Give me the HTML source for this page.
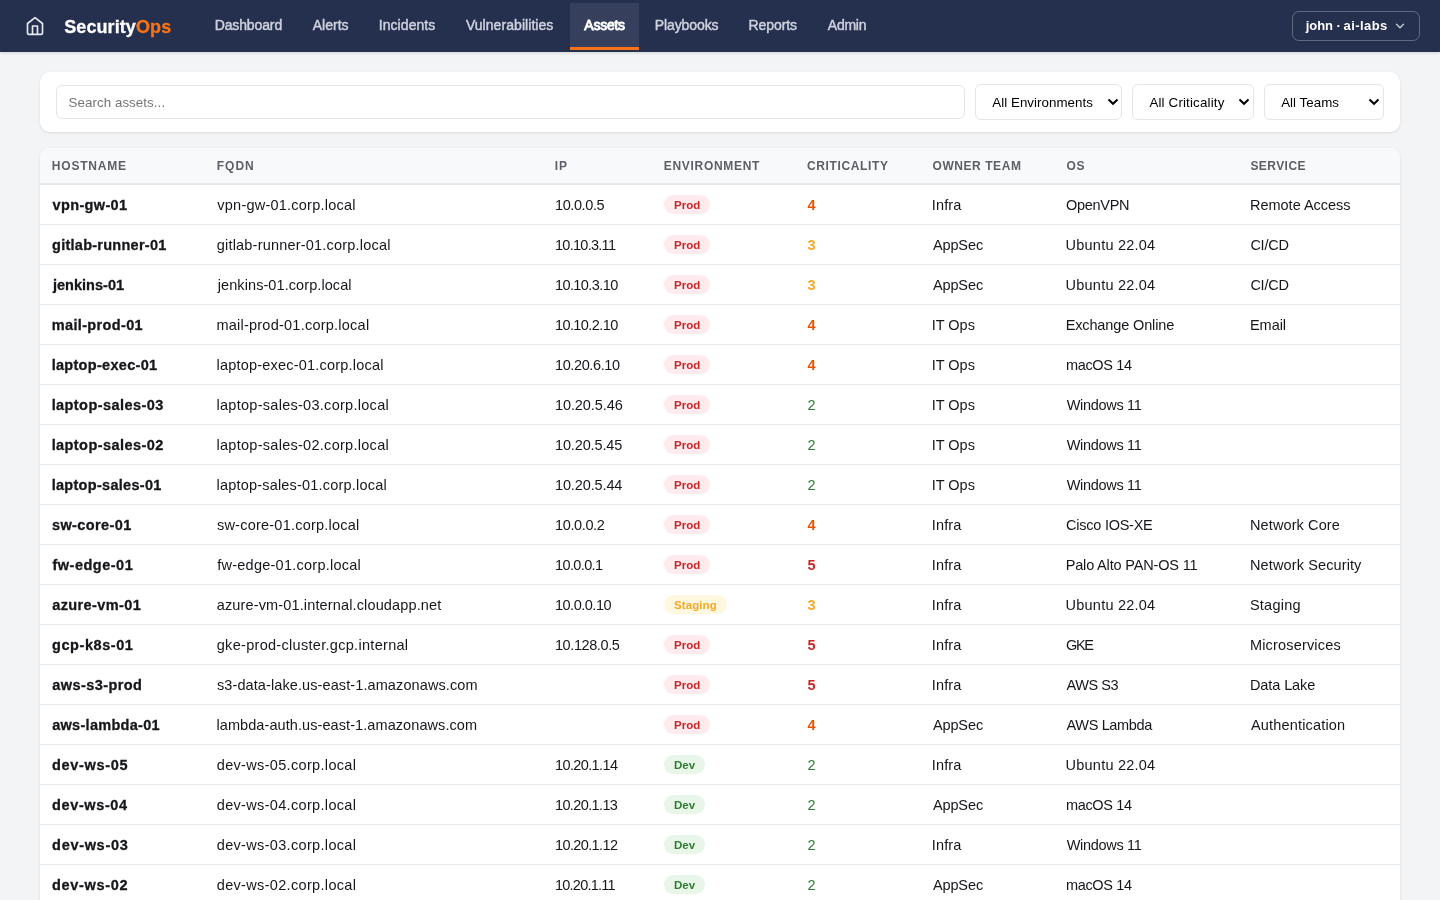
<!DOCTYPE html>
<html lang="en">
<head>
<meta charset="utf-8">
<title>SecurityOps - Assets</title>
<style>
*{box-sizing:border-box;margin:0;padding:0}
html,body{width:1440px;height:900px;overflow:hidden}
body{background:#f2f4f6;font-family:"Liberation Sans",sans-serif;color:#15171b;font-size:14.5px}
.nav,.fcard,.tcard{will-change:transform}
.nav{position:absolute;left:0;top:0;width:1440px;height:52px;background:#252f4e;box-shadow:0 1px 3px rgba(0,0,0,.14)}
.home{position:absolute;left:25px;top:16px;width:20px;height:20px}
.brand{position:absolute;left:64.2px;top:15px;letter-spacing:.09px;-webkit-text-stroke:.3px;font-size:18px;font-weight:700;color:#fff;line-height:24px}
.brand b{color:#f97316}
.links{position:absolute;left:201px;top:3px;height:47px}
.links a{position:absolute;top:0;display:block;height:47px;line-height:44px;text-align:center;color:#cdd2de;font-size:14px;white-space:nowrap;text-decoration:none;border-bottom:3px solid transparent;-webkit-text-stroke:.45px}
.links a.on{color:#fff;background:rgba(255,255,255,.08);border-bottom-color:#f97316;-webkit-text-stroke:.85px}
.user{position:absolute;left:1292px;top:11px;width:128px;height:30px;border:1px solid rgba(255,255,255,.28);border-radius:7px;color:#fff;font-weight:700;font-size:13px;line-height:27px;padding-left:12.8px;letter-spacing:.2px;word-spacing:-1.2px}
.user svg{position:absolute;left:101px;top:8px}
.fcard{position:absolute;left:40px;top:72px;width:1360px;height:60px;background:#fff;border-radius:10px;box-shadow:0 1px 3px rgba(0,0,0,.1)}
.search{position:absolute;left:16.4px;top:13px;width:908.3px;height:33.5px;border:1px solid #e3e5eb;border-radius:6px;color:#757575;font-size:13.33px;line-height:33.5px;padding-left:11.1px;letter-spacing:.07px}
.sel{position:absolute;top:12px;height:35.5px;border:1px solid #e3e5eb;border-radius:6px;color:#000;font-size:13.33px;line-height:35.5px;padding-left:16px;letter-spacing:.04px}
.sel svg{position:absolute;right:2.2px;top:13.2px}
.tcard{position:absolute;left:40px;top:148px;width:1360px;height:800px;background:#fff;border-radius:10px;box-shadow:0 1px 3px rgba(0,0,0,.1);overflow:hidden}
table{border-collapse:separate;border-spacing:0;width:1360px;table-layout:fixed}
th{height:37px;background:#f8f9fb;border-bottom:2px solid #e5e7eb;text-align:left;padding:1px 12px 0;font-size:12px;font-weight:700;color:#5c6066;white-space:nowrap;text-transform:uppercase}
td{height:40px;border-bottom:1px solid #e8eaed;padding:1px 12px 0;font-size:14.5px;white-space:nowrap;vertical-align:middle}
td.h{font-weight:700;-webkit-text-stroke:.3px}
.b{display:inline-block;position:relative;top:-.5px;height:19px;line-height:21px;border-radius:10px;padding:0 9.8px 0 10px;font-size:11.5px;font-weight:700;vertical-align:middle}
.prod{background:#ffebee;color:#c62828}
.staging{background:#fff8e1;color:#f9a825}
.dev{background:#e8f5e9;color:#2e7d32}
.c{font-weight:700;margin-left:.4px}
.c5{color:#c62828}.c4{color:#e65100}.c3{color:#f9a825}.c2{color:#2e7d32;font-weight:400}
</style>
</head>
<body>
<div class="nav">
<svg class="home" viewBox="0 0 24 24" fill="none" stroke="#e6e9f0" stroke-width="2" stroke-linecap="round" stroke-linejoin="round"><path d="M3 9l9-7 9 7v11a2 2 0 0 1-2 2H5a2 2 0 0 1-2-2z"/><polyline points="9 22 9 12 15 12 15 22"/></svg>
<div class="brand">Security<b>Ops</b></div>
<div class="links"><a style="left:0.5px;width:94px;letter-spacing:-0.12px;text-indent:-0.31px">Dashboard</a><a style="left:97.5px;width:64px;letter-spacing:0.02px;text-indent:0.38px">Alerts</a><a style="left:164.5px;width:83.5px;letter-spacing:0.08px;text-indent:-0.42px">Incidents</a><a style="left:251px;width:115px;letter-spacing:0.06px;text-indent:0.3px">Vulnerabilities</a><a class="on" style="left:369px;width:69px;letter-spacing:-0.24px;text-indent:0.2px">Assets</a><a style="left:440.5px;width:90.75px;letter-spacing:-0.09px;text-indent:-0.46px">Playbooks</a><a style="left:534.25px;width:75.5px;letter-spacing:-0.05px;text-indent:-0.59px">Reports</a><a style="left:612.75px;width:66px;letter-spacing:-0.28px;text-indent:0.52px">Admin</a></div>
<div class="user"><span style="letter-spacing:-.1px;margin-right:1px">john</span> · <span style="letter-spacing:.42px">ai-labs</span><svg width="12" height="12" viewBox="0 0 24 24" fill="none" stroke="#c9cedb" stroke-width="2.6" stroke-linecap="round" stroke-linejoin="round"><polyline points="5 8.5 12 15.5 19 8.5"/></svg></div>
</div>
<div class="fcard">
<div class="search">Search assets...</div>
<div class="sel" style="left:935.3px;width:146.5px">All Environments<svg width="12" height="8" viewBox="0 0 12 8" fill="none" stroke="#000" stroke-width="2"><polyline points="1.5 1.5 6 5.8 10.5 1.5"/></svg></div>
<div class="sel" style="left:1092.4px;width:121.2px;letter-spacing:.17px">All Criticality<svg width="12" height="8" viewBox="0 0 12 8" fill="none" stroke="#000" stroke-width="2"><polyline points="1.5 1.5 6 5.8 10.5 1.5"/></svg></div>
<div class="sel" style="left:1224.2px;width:119.4px">All Teams<svg width="12" height="8" viewBox="0 0 12 8" fill="none" stroke="#000" stroke-width="2"><polyline points="1.5 1.5 6 5.8 10.5 1.5"/></svg></div>
</div>
<div class="tcard">
<table>
<colgroup><col style="width:165px"><col style="width:338px"><col style="width:109px"><col style="width:143px"><col style="width:126px"><col style="width:134px"><col style="width:184px"><col style="width:161px"></colgroup>
<thead><tr><th style="letter-spacing:0.77px;padding-left:11.85px">Hostname</th><th style="letter-spacing:0.95px;padding-left:11.85px">FQDN</th><th style="letter-spacing:0.74px;padding-left:11.85px">IP</th><th style="letter-spacing:0.68px;padding-left:11.85px">Environment</th><th style="letter-spacing:0.65px;padding-left:11.9px">Criticality</th><th style="letter-spacing:0.56px;padding-left:11.54px">Owner Team</th><th style="letter-spacing:0.87px;padding-left:11.39px">OS</th><th style="letter-spacing:0.44px;padding-left:11.4px">Service</th></tr></thead>
<tbody>
<tr><td class="h" style="letter-spacing:0.35px;padding-left:12.6px">vpn-gw-01</td><td style="letter-spacing:0.23px;padding-left:12.32px">vpn-gw-01.corp.local</td><td style="letter-spacing:-0.4px;padding-left:11.97px">10.0.0.5</td><td><span class="b prod" style="letter-spacing:0.03px">Prod</span></td><td><span class="c c4">4</span></td><td style="letter-spacing:0.16px;padding-left:10.72px">Infra</td><td style="letter-spacing:-0.29px;padding-left:11.06px">OpenVPN</td><td style="letter-spacing:-0.01px;padding-left:10.99px">Remote Access</td></tr>
<tr><td class="h" style="letter-spacing:0.26px;padding-left:12.04px">gitlab-runner-01</td><td style="letter-spacing:0.2px;padding-left:11.74px">gitlab-runner-01.corp.local</td><td style="letter-spacing:-0.72px;padding-left:11.97px">10.10.3.11</td><td><span class="b prod" style="letter-spacing:0.03px">Prod</span></td><td><span class="c c3">3</span></td><td style="letter-spacing:-0.1px;padding-left:11.88px">AppSec</td><td style="letter-spacing:0.23px;padding-left:10.56px">Ubuntu 22.04</td><td style="letter-spacing:-0.25px;padding-left:11.38px">CI/CD</td></tr>
<tr><td class="h" style="letter-spacing:0.03px;padding-left:12.92px">jenkins-01</td><td style="letter-spacing:0.08px;padding-left:12.78px">jenkins-01.corp.local</td><td style="letter-spacing:-0.59px;padding-left:11.97px">10.10.3.10</td><td><span class="b prod" style="letter-spacing:0.03px">Prod</span></td><td><span class="c c3">3</span></td><td style="letter-spacing:-0.1px;padding-left:11.88px">AppSec</td><td style="letter-spacing:0.23px;padding-left:10.56px">Ubuntu 22.04</td><td style="letter-spacing:-0.25px;padding-left:11.38px">CI/CD</td></tr>
<tr><td class="h" style="letter-spacing:0.36px;padding-left:11.71px">mail-prod-01</td><td style="letter-spacing:0.24px;padding-left:11.38px">mail-prod-01.corp.local</td><td style="letter-spacing:-0.59px;padding-left:11.97px">10.10.2.10</td><td><span class="b prod" style="letter-spacing:0.03px">Prod</span></td><td><span class="c c4">4</span></td><td style="letter-spacing:-0.01px;padding-left:10.72px">IT Ops</td><td style="letter-spacing:-0.13px;padding-left:10.66px">Exchange Online</td><td style="letter-spacing:-0.05px;padding-left:10.99px">Email</td></tr>
<tr><td class="h" style="letter-spacing:0.3px;padding-left:11.64px">laptop-exec-01</td><td style="letter-spacing:0.21px;padding-left:11.47px">laptop-exec-01.corp.local</td><td style="letter-spacing:-0.38px;padding-left:11.97px">10.20.6.10</td><td><span class="b prod" style="letter-spacing:0.03px">Prod</span></td><td><span class="c c4">4</span></td><td style="letter-spacing:-0.01px;padding-left:10.72px">IT Ops</td><td style="letter-spacing:-0.33px;padding-left:10.92px">macOS 14</td><td></td></tr>
<tr><td class="h" style="letter-spacing:0.43px;padding-left:11.64px">laptop-sales-03</td><td style="letter-spacing:0.28px;padding-left:11.47px">laptop-sales-03.corp.local</td><td style="letter-spacing:-0.09px;padding-left:11.97px">10.20.5.46</td><td><span class="b prod" style="letter-spacing:0.03px">Prod</span></td><td><span class="c c2">2</span></td><td style="letter-spacing:-0.01px;padding-left:10.72px">IT Ops</td><td style="letter-spacing:-0.31px;padding-left:11.69px">Windows 11</td><td></td></tr>
<tr><td class="h" style="letter-spacing:0.43px;padding-left:11.64px">laptop-sales-02</td><td style="letter-spacing:0.28px;padding-left:11.47px">laptop-sales-02.corp.local</td><td style="letter-spacing:-0.13px;padding-left:11.97px">10.20.5.45</td><td><span class="b prod" style="letter-spacing:0.03px">Prod</span></td><td><span class="c c2">2</span></td><td style="letter-spacing:-0.01px;padding-left:10.72px">IT Ops</td><td style="letter-spacing:-0.31px;padding-left:11.69px">Windows 11</td><td></td></tr>
<tr><td class="h" style="letter-spacing:0.3px;padding-left:11.64px">laptop-sales-01</td><td style="letter-spacing:0.2px;padding-left:11.47px">laptop-sales-01.corp.local</td><td style="letter-spacing:-0.12px;padding-left:11.97px">10.20.5.44</td><td><span class="b prod" style="letter-spacing:0.03px">Prod</span></td><td><span class="c c2">2</span></td><td style="letter-spacing:-0.01px;padding-left:10.72px">IT Ops</td><td style="letter-spacing:-0.31px;padding-left:11.69px">Windows 11</td><td></td></tr>
<tr><td class="h" style="letter-spacing:0.39px;padding-left:11.96px">sw-core-01</td><td style="letter-spacing:0.23px;padding-left:11.94px">sw-core-01.corp.local</td><td style="letter-spacing:-0.36px;padding-left:11.97px">10.0.0.2</td><td><span class="b prod" style="letter-spacing:0.03px">Prod</span></td><td><span class="c c4">4</span></td><td style="letter-spacing:0.16px;padding-left:10.72px">Infra</td><td style="letter-spacing:-0.25px;padding-left:11.11px">Cisco IOS-XE</td><td style="letter-spacing:0.11px;padding-left:10.99px">Network Core</td></tr>
<tr><td class="h" style="letter-spacing:0.51px;padding-left:12.43px">fw-edge-01</td><td style="letter-spacing:0.25px;padding-left:12.19px">fw-edge-01.corp.local</td><td style="letter-spacing:-0.61px;padding-left:11.97px">10.0.0.1</td><td><span class="b prod" style="letter-spacing:0.03px">Prod</span></td><td><span class="c c5">5</span></td><td style="letter-spacing:0.16px;padding-left:10.72px">Infra</td><td style="letter-spacing:-0.16px;padding-left:10.66px">Palo Alto PAN-OS 11</td><td style="letter-spacing:0.12px;padding-left:10.99px">Network Security</td></tr>
<tr><td class="h" style="letter-spacing:0.39px;padding-left:12.2px">azure-vm-01</td><td style="letter-spacing:0.14px;padding-left:11.74px">azure-vm-01.internal.cloudapp.net</td><td style="letter-spacing:-0.49px;padding-left:11.97px">10.0.0.10</td><td><span class="b staging" style="letter-spacing:0.09px">Staging</span></td><td><span class="c c3">3</span></td><td style="letter-spacing:0.16px;padding-left:10.72px">Infra</td><td style="letter-spacing:0.23px;padding-left:10.56px">Ubuntu 22.04</td><td style="letter-spacing:0.24px;padding-left:10.94px">Staging</td></tr>
<tr><td class="h" style="letter-spacing:0.56px;padding-left:12.04px">gcp-k8s-01</td><td style="letter-spacing:0.3px;padding-left:11.74px">gke-prod-cluster.gcp.internal</td><td style="letter-spacing:-0.41px;padding-left:11.97px">10.128.0.5</td><td><span class="b prod" style="letter-spacing:0.03px">Prod</span></td><td><span class="c c5">5</span></td><td style="letter-spacing:0.16px;padding-left:10.72px">Infra</td><td style="letter-spacing:-1.37px;padding-left:11.11px">GKE</td><td style="letter-spacing:0.17px;padding-left:10.99px">Microservices</td></tr>
<tr><td class="h" style="letter-spacing:0.43px;padding-left:12.2px">aws-s3-prod</td><td style="letter-spacing:0.1px;padding-left:11.94px">s3-data-lake.us-east-1.amazonaws.com</td><td></td><td><span class="b prod" style="letter-spacing:0.03px">Prod</span></td><td><span class="c c5">5</span></td><td style="letter-spacing:0.16px;padding-left:10.72px">Infra</td><td style="letter-spacing:-0.44px;padding-left:11.58px">AWS S3</td><td style="letter-spacing:-0.1px;padding-left:10.99px">Data Lake</td></tr>
<tr><td class="h" style="letter-spacing:0.29px;padding-left:12.2px">aws-lambda-01</td><td style="letter-spacing:0.08px;padding-left:11.47px">lambda-auth.us-east-1.amazonaws.com</td><td></td><td><span class="b prod" style="letter-spacing:0.03px">Prod</span></td><td><span class="c c4">4</span></td><td style="letter-spacing:-0.1px;padding-left:11.88px">AppSec</td><td style="letter-spacing:-0.36px;padding-left:11.58px">AWS Lambda</td><td style="letter-spacing:0.17px;padding-left:11.98px">Authentication</td></tr>
<tr><td class="h" style="letter-spacing:0.67px;padding-left:12.08px">dev-ws-05</td><td style="letter-spacing:0.33px;padding-left:11.74px">dev-ws-05.corp.local</td><td style="letter-spacing:-0.61px;padding-left:11.97px">10.20.1.14</td><td><span class="b dev" style="letter-spacing:0.04px">Dev</span></td><td><span class="c c2">2</span></td><td style="letter-spacing:0.16px;padding-left:10.72px">Infra</td><td style="letter-spacing:0.23px;padding-left:10.56px">Ubuntu 22.04</td><td></td></tr>
<tr><td class="h" style="letter-spacing:0.61px;padding-left:12.08px">dev-ws-04</td><td style="letter-spacing:0.33px;padding-left:11.74px">dev-ws-04.corp.local</td><td style="letter-spacing:-0.62px;padding-left:11.97px">10.20.1.13</td><td><span class="b dev" style="letter-spacing:0.04px">Dev</span></td><td><span class="c c2">2</span></td><td style="letter-spacing:-0.1px;padding-left:11.88px">AppSec</td><td style="letter-spacing:-0.33px;padding-left:10.92px">macOS 14</td><td></td></tr>
<tr><td class="h" style="letter-spacing:0.69px;padding-left:12.08px">dev-ws-03</td><td style="letter-spacing:0.33px;padding-left:11.74px">dev-ws-03.corp.local</td><td style="letter-spacing:-0.61px;padding-left:11.97px">10.20.1.12</td><td><span class="b dev" style="letter-spacing:0.04px">Dev</span></td><td><span class="c c2">2</span></td><td style="letter-spacing:0.16px;padding-left:10.72px">Infra</td><td style="letter-spacing:-0.31px;padding-left:11.69px">Windows 11</td><td></td></tr>
<tr><td class="h" style="letter-spacing:0.67px;padding-left:12.08px">dev-ws-02</td><td style="letter-spacing:0.33px;padding-left:11.74px">dev-ws-02.corp.local</td><td style="letter-spacing:-0.76px;padding-left:11.97px">10.20.1.11</td><td><span class="b dev" style="letter-spacing:0.04px">Dev</span></td><td><span class="c c2">2</span></td><td style="letter-spacing:-0.1px;padding-left:11.88px">AppSec</td><td style="letter-spacing:-0.33px;padding-left:10.92px">macOS 14</td><td></td></tr>
<tr><td class="h" style="letter-spacing:0.2px">dev-ws-01</td><td style="letter-spacing:0.05px">dev-ws-01.corp.local</td><td style="letter-spacing:-0.5px">10.20.1.10</td><td><span class="b dev" style="letter-spacing:0.04px">Dev</span></td><td><span class="c c2">2</span></td><td style="letter-spacing:0.16px;padding-left:10.72px">Infra</td><td style="letter-spacing:0.23px;padding-left:10.56px">Ubuntu 22.04</td><td></td></tr>
</tbody>
</table>
</div>
</body>
</html>
